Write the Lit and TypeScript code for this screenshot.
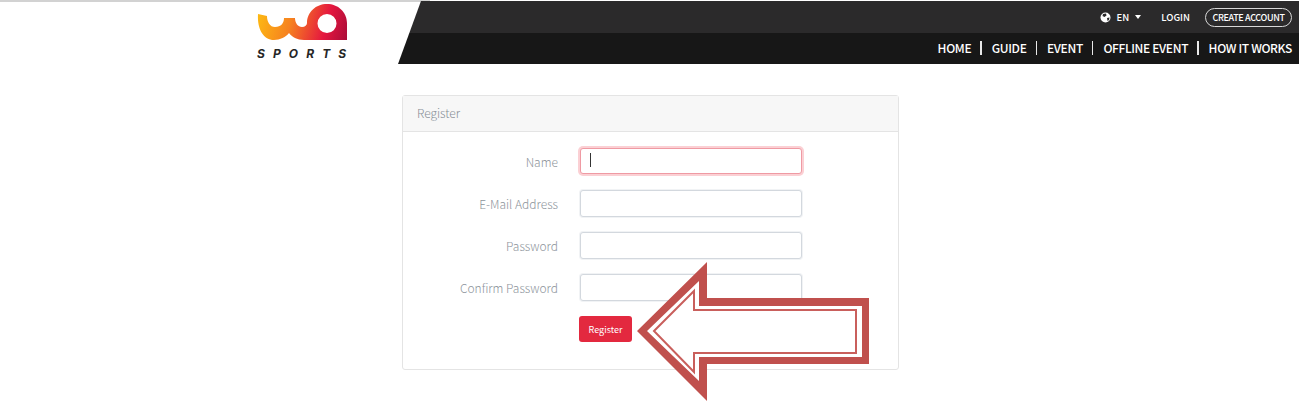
import { LitElement, html, css } from "lit";
import { customElement } from "lit/decorators.js";

const NAV = ["HOME", "GUIDE", "EVENT", "OFFLINE EVENT", "HOW IT WORKS"];
const FIELDS = [
  { label: "Name", type: "text", focus: true },
  { label: "E-Mail Address", type: "email", focus: false },
  { label: "Password", type: "password", focus: false },
  { label: "Confirm Password", type: "password", focus: false },
];

@customElement("app-root")
export class AppRoot extends LitElement {
  static styles = css`
    :host {
      display: block;
      position: relative;
      height: 414px;
      overflow: hidden;
      background: #fff;
      font-family: "Noto Sans CJK SC", "Noto Sans", sans-serif;
    }

    .topline {
      position: absolute;
      top: 0;
      left: 0;
      width: 430px;
      height: 2px;
      background: #d2d2d2;
    }

    header {
      display: flex;
      box-sizing: border-box;
      height: 64px;
      padding-top: 1px;
    }

    .logo {
      width: 141px;
      margin-left: 257px;
      flex: none;
    }

    .logo svg {
      display: block;
      width: 92px;
      height: 42px;
      margin-top: 2px;
    }

    .sports {
      font-family: "Inter", "Liberation Sans", sans-serif;
      font-weight: 700;
      font-style: italic;
      font-size: 12px;
      line-height: 13px;
      letter-spacing: 8.1px;
      color: #262626;
      margin-top: 2px;
      white-space: nowrap;
    }

    .bar {
      flex: 1;
      display: flex;
      flex-direction: column;
      clip-path: polygon(23px 0, 100% 0, 100% 100%, 0 100%);
      color: #fff;
    }

    .bar-top {
      height: 32px;
      background: #2b2a2b;
      display: flex;
      align-items: center;
      justify-content: flex-end;
      padding-right: 7px;
      font-size: 9.5px;
      font-weight: 500;
    }

    .lang {
      display: flex;
      align-items: center;
      gap: 6px;
      margin-right: 20px;
    }

    .caret-down {
      width: 0;
      height: 0;
      border-left: 3.5px solid transparent;
      border-right: 3.5px solid transparent;
      border-top: 4px solid #fff;
    }

    .login {
      margin-right: 15px;
    }

    .create {
      box-sizing: border-box;
      width: 87px;
      height: 19px;
      border: 1px solid #d8d8d8;
      border-radius: 10px;
      display: flex;
      align-items: center;
      justify-content: center;
      font-size: 9px;
      letter-spacing: -0.35px;
      white-space: nowrap;
    }

    .bar-bottom {
      flex: 1;
      background: #171717;
      display: flex;
      align-items: center;
      justify-content: flex-end;
      padding-right: 7px;
      padding-bottom: 2px;
      font-size: 12px;
      font-weight: 500;
      letter-spacing: -0.36px;
    }

    .sep {
      width: 1.5px;
      height: 14px;
      background: #e8e8e8;
      margin: 0 10px 0 9px;
    }

    .card {
      box-sizing: border-box;
      width: 497px;
      height: 275px;
      margin: 31px 0 0 402px;
      border: 1px solid #e4e4e4;
      border-radius: 3px;
    }

    .card-head {
      height: 36px;
      box-sizing: border-box;
      background: #f7f7f7;
      border-bottom: 1px solid #e4e4e4;
      padding: 0 0 3px 14px;
      display: flex;
      align-items: center;
      font-size: 12px;
      font-weight: 300;
      color: #868e96;
    }

    .form {
      padding-top: 17px;
      display: flex;
      flex-direction: column;
      gap: 15px;
    }

    .row {
      display: flex;
      align-items: center;
      height: 27px;
    }

    .row:first-child {
      margin-top: -1px;
    }

    label {
      width: 155px;
      margin-right: 22px;
      text-align: right;
      font-size: 12px;
      font-weight: 300;
      color: #8d949b;
    }

    .field {
      position: relative;
      width: 222px;
      height: 27px;
    }

    input {
      display: block;
      box-sizing: border-box;
      width: 100%;
      height: 100%;
      border: 1px solid #d3d8de;
      border-radius: 3px;
      box-shadow: 0 0 0 1px #f1f3f5;
      background: #fff;
      outline: none;
      padding: 0;
    }

    input.focus {
      height: 26px;
      border-color: #ef9aa3;
      box-shadow: 0 0 0 2px #fbd0d4;
    }

    .text-caret {
      position: absolute;
      left: 10px;
      top: 5px;
      width: 1px;
      height: 14px;
      background: #333;
    }

    .actions {
      padding-left: 176px;
    }

    button {
      display: block;
      width: 53px;
      height: 26px;
      border: none;
      border-radius: 3px;
      background: #e3293f;
      color: #fff;
      font-family: inherit;
      font-size: 9px;
      padding: 0;
    }

    .arrow {
      position: absolute;
      left: 630px;
      top: 255px;
      width: 245px;
      height: 150px;
    }
  `;

  render() {
    return html`
      <div class="topline"></div>
      <header>
        <div class="logo">
          <svg viewBox="257 3 92 42" aria-hidden="true">
            <defs>
              <linearGradient id="wa" x1="258" y1="14" x2="350" y2="40" gradientUnits="userSpaceOnUse">
                <stop offset="0" stop-color="#fdb913"></stop>
                <stop offset="0.35" stop-color="#f6821f"></stop>
                <stop offset="0.72" stop-color="#e5173f"></stop>
                <stop offset="1" stop-color="#a30b38"></stop>
              </linearGradient>
            </defs>
            <path
              fill="url(#wa)"
              fill-rule="evenodd"
              d="M258 14 L267 16 C267 22 270 27 275 27 C281 27 284 23 284 18 L295 18 C295 23 298 27 302 27 C305 27 307 25 307 23 C307 12 316 4 327 4 C338 4 347 12 347 23 L347 40 L304 40 C297 40 292 37 289 33 C286 37 280 40 274 40 C264 40 257 30 258 14 Z M327 14 A9.5 9.5 0 1 0 327 33 A9.5 9.5 0 1 0 327 14 Z"
            ></path>
          </svg>
          <div class="sports">SPORTS</div>
        </div>
        <div class="bar">
          <div class="bar-top">
            <div class="lang">
              <svg width="11" height="11" viewBox="0 0 11 11" aria-hidden="true">
                <circle cx="5.5" cy="5.5" r="5" fill="#fff"></circle>
                <path fill="#2b2a2b" d="M3 2 L6 1.5 L6.5 3.5 L4.5 5 L2.5 4 Z M7 6 L9.5 5.5 L9 8 L7.5 9 Z"></path>
              </svg>
              <span>EN</span>
              <span class="caret-down"></span>
            </div>
            <span class="login">LOGIN</span>
            <span class="create">CREATE ACCOUNT</span>
          </div>
          <nav class="bar-bottom">
            ${NAV.map(
              (item, idx) => html`${idx > 0 ? html`<span class="sep"></span>` : ""}<span>${item}</span>`
            )}
          </nav>
        </div>
      </header>

      <section class="card">
        <div class="card-head">Register</div>
        <div class="form">
          ${FIELDS.map(
            (f) => html`
              <div class="row">
                <label>${f.label}</label>
                <div class="field">
                  <input type=${f.type} class=${f.focus ? "focus" : ""} />
                  ${f.focus ? html`<span class="text-caret"></span>` : ""}
                </div>
              </div>
            `
          )}
          <div class="actions"><button>Register</button></div>
        </div>
      </section>

      <svg class="arrow" viewBox="630 255 245 150" aria-hidden="true">
        <polygon fill="#c0504d" points="637,331 707,262 707,298 869,298 869,364 707,364 707,401"></polygon>
        <polygon fill="#fff" points="647,331 699,281 699,306 862,306 862,357 699,357 699,381"></polygon>
        <polygon fill="#fff" stroke="#c95f5c" stroke-width="2" points="654,331 694,291 694,310 856,310 856,353 694,353 694,372"></polygon>
      </svg>
    `;
  }
}
